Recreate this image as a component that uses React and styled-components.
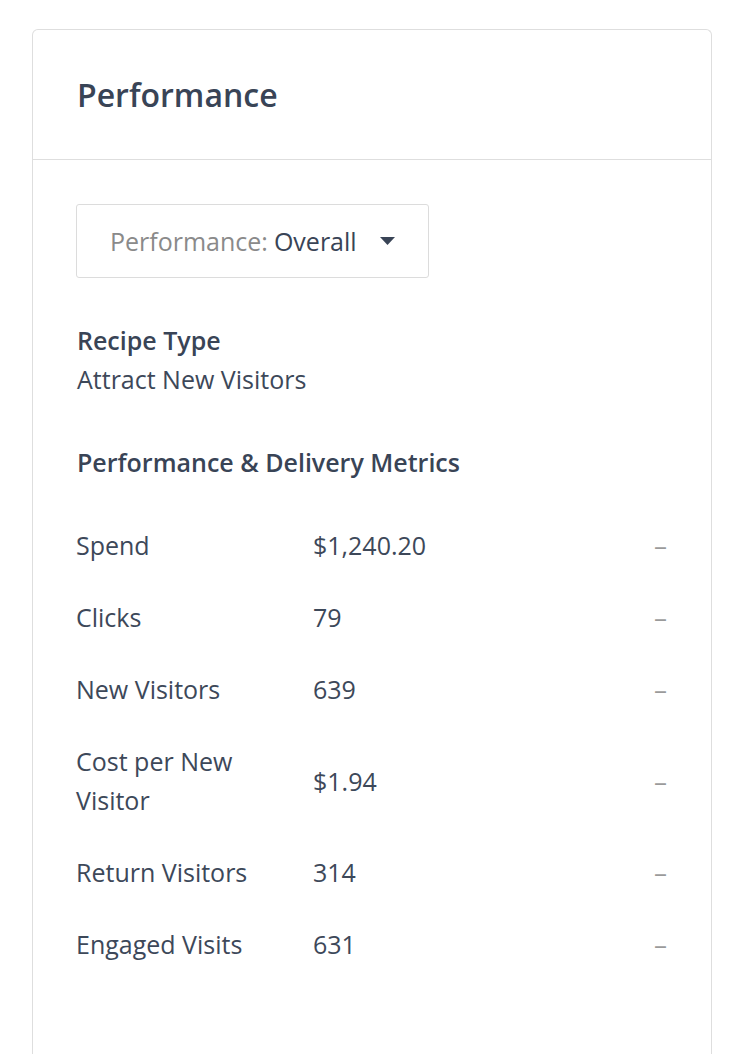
import React from "react";
import styled, { createGlobalStyle } from "styled-components";

const Global = createGlobalStyle`
  html, body { margin: 0; padding: 0; background: #ffffff; }
  body { font-family: "Open Sans", "Noto Sans", sans-serif; color: #3a4557; }
  * { box-sizing: border-box; }
`;

const Page = styled.div`
  padding: 29px 32px 0 32px;
  height: 1054px;
  overflow: hidden;
`;

const Card = styled.section`
  width: 680px;
  min-height: 1100px;
  border: 1px solid #dedede;
  border-bottom: none;
  border-radius: 6px 6px 0 0;
  background: #fff;
`;

const Header = styled.header`
  height: 130px;
  display: flex;
  align-items: center;
  padding-left: 44px;
  border-bottom: 1px solid #dedede;
`;

const Title = styled.h2`
  margin: 0;
  font-size: 32px;
  font-weight: 600;
  color: #394456;
`;

const Body = styled.div`
  padding: 44px 44px 0 43px;
`;

const Select = styled.button`
  display: flex;
  align-items: center;
  width: 353px;
  height: 74px;
  padding: 0 0 0 33px;
  border: 1px solid #dcdcdc;
  border-radius: 3px;
  background: #fff;
  font-family: inherit;
  font-size: 25px;
  cursor: pointer;
`;

const SelectLabel = styled.span`
  color: #8a8a8a;
`;

const SelectValue = styled.span`
  color: #394456;
  margin-left: 6px;
`;

const Caret = styled.svg`
  margin-left: 23px;
  width: 15px;
  height: 8px;
`;

const Section = styled.div`
  margin-top: ${(p) => p.$top || 0}px;
  padding-left: 1px;
  font-size: 25px;
  line-height: 39px;
`;

const Label = styled.div`
  font-weight: 600;
  color: #394456;
`;

const Text = styled.div`
  color: #3d4859;
`;

const Table = styled.div`
  margin-top: 28px;
  display: grid;
  grid-template-columns: 237px 1fr auto;
  font-size: 25px;
  line-height: 39px;
  color: #3d4859;
`;

const Cell = styled.div`
  padding: 16px 0 17px;
  display: flex;
  align-items: center;
  padding-right: ${(p) => (p.$label ? "37px" : "0")};
`;

const Dash = styled.span`
  color: #9a9a9a;
  font-size: 26px;
`;

const rows = [
  ["Spend", "$1,240.20"],
  ["Clicks", "79"],
  ["New Visitors", "639"],
  ["Cost per New Visitor", "$1.94"],
  ["Return Visitors", "314"],
  ["Engaged Visits", "631"],
];

export default function App() {
  return (
    <>
      <Global />
      <Page>
        <Card>
          <Header>
            <Title>Performance</Title>
          </Header>
          <Body>
            <Select>
              <SelectLabel>Performance:</SelectLabel>
              <SelectValue>Overall</SelectValue>
              <Caret viewBox="0 0 15 8">
                <path d="M0 0 H15 L7.5 8 Z" fill="#394456" />
              </Caret>
            </Select>
            <Section $top={43}>
              <Label>Recipe Type</Label>
              <Text>Attract New Visitors</Text>
            </Section>
            <Section $top={44}>
              <Label>Performance &amp; Delivery Metrics</Label>
            </Section>
            <Table>
              {rows.map(([k, v]) => (
                <React.Fragment key={k}>
                  <Cell $label>{k}</Cell>
                  <Cell>{v}</Cell>
                  <Cell>
                    <Dash>–</Dash>
                  </Cell>
                </React.Fragment>
              ))}
            </Table>
          </Body>
        </Card>
      </Page>
    </>
  );
}
